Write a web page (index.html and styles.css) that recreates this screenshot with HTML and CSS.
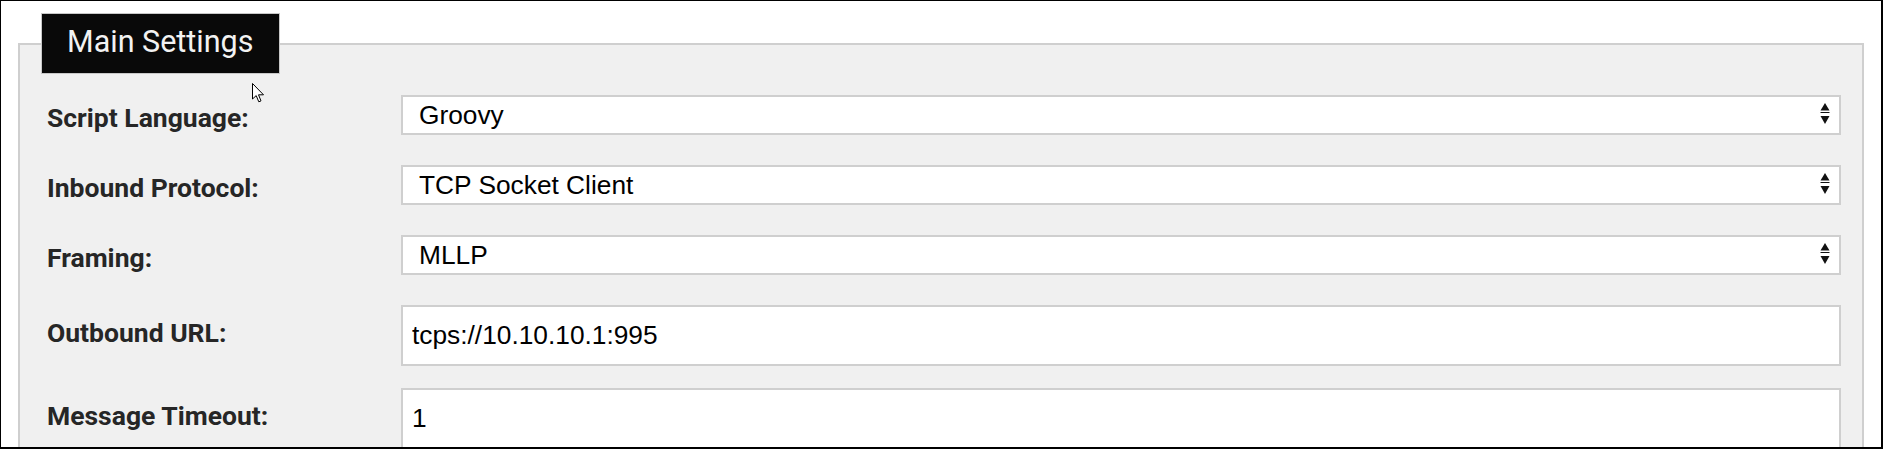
FILE: index.html
```html
<!DOCTYPE html>
<html lang="en">
<head>
<meta charset="utf-8">
<title>Main Settings</title>
<link rel="stylesheet" href="styles.css">
</head>
<body>
<div class="frame">
  <fieldset class="panel">
    <legend class="panel-title">Main Settings</legend>

    <div class="row row-select">
      <label class="row-label" for="lang">Script Language:</label>
      <div class="select-wrap">
        <select id="lang" class="field field-select"><option>Groovy</option></select>
        <svg class="select-arrows" viewBox="0 0 10 24" width="10" height="24"><polygon points="0.5,8.5 5,1 9.5,8.5"/><rect x="0.5" y="10" width="9" height="1"/><polygon points="0.5,14 9.5,14 5,22"/></svg>
      </div>
    </div>

    <div class="row row-select">
      <label class="row-label" for="proto">Inbound Protocol:</label>
      <div class="select-wrap">
        <select id="proto" class="field field-select"><option>TCP Socket Client</option></select>
        <svg class="select-arrows" viewBox="0 0 10 24" width="10" height="24"><polygon points="0.5,8.5 5,1 9.5,8.5"/><rect x="0.5" y="10" width="9" height="1"/><polygon points="0.5,14 9.5,14 5,22"/></svg>
      </div>
    </div>

    <div class="row row-select">
      <label class="row-label" for="framing">Framing:</label>
      <div class="select-wrap">
        <select id="framing" class="field field-select"><option>MLLP</option></select>
        <svg class="select-arrows" viewBox="0 0 10 24" width="10" height="24"><polygon points="0.5,8.5 5,1 9.5,8.5"/><rect x="0.5" y="10" width="9" height="1"/><polygon points="0.5,14 9.5,14 5,22"/></svg>
      </div>
    </div>

    <div class="row row-input">
      <label class="row-label" for="url">Outbound URL:</label>
      <input id="url" class="field field-input" type="text" value="tcps://10.10.10.1:995">
    </div>

    <div class="row row-input">
      <label class="row-label" for="timeout">Message Timeout:</label>
      <input id="timeout" class="field field-input" type="text" value="1">
    </div>
  </fieldset>

  <svg class="cursor" viewBox="0 0 13 21" width="13" height="21"><path d="M0.5,0.5 L0.5,16 L4.2,12.6 L6.8,18.8 L9,17.9 L6.5,11.8 L11.5,11.8 Z"/></svg>
</div>
</body>
</html>
```

FILE: styles.css
```css
html, body {
  margin: 0;
  height: 100%;
  overflow: hidden;
  background: #ffffff;
}

.frame {
  position: relative;
  box-sizing: border-box;
  height: 449px;
  border-style: solid;
  border-color: #000000;
  border-width: 1px 2px 2px 1px;
  padding: 12px 17px 0 17px;
  overflow: hidden;
}

.panel {
  margin: 0;
  min-width: 0;
  border: 2px solid #cfcfcf;
  background: #f0f0f0;
  padding: 21px 21px 0 21px;
}

.panel-title {
  padding: 10px 26px 14px 25px;
  background: #090909;
  color: #f2f2f2;
  border: 1px solid #c8c8c8;
  font-family: Roboto, "Noto Sans", sans-serif;
  font-weight: 400;
  font-size: 30.5px;
  line-height: normal;
}

.row {
  display: flex;
  align-items: flex-start;
}

.row-select {
  margin-bottom: 30px;
}

.row-input {
  margin-bottom: 22px;
}

.row-label {
  flex: 0 0 360px;
  box-sizing: border-box;
  padding-left: 6px;
  padding-top: 7px;
  font-family: Roboto, "Noto Sans", sans-serif;
  font-weight: 700;
  font-size: 26.5px;
  line-height: normal;
  color: #262626;
}

.row-input .row-label {
  padding-top: 12px;
}

.select-wrap {
  flex: 1 1 auto;
  position: relative;
  min-width: 0;
}

.field {
  display: block;
  width: 100%;
  box-sizing: border-box;
  margin: 0;
  border: 2px solid #cfcfcf;
  border-radius: 0;
  background: #ffffff;
  color: #000000;
  font-family: "Liberation Sans", Arial, sans-serif;
  font-size: 26.3px;
  outline: none;
}

.field-select {
  -webkit-appearance: none;
  appearance: none;
  height: 40px;
  padding: 0 40px 0 16px;
}

.field-input {
  flex: 1 1 auto;
  min-width: 0;
  height: 61px;
  padding: 0 9px;
}

.select-arrows {
  position: absolute;
  right: 11px;
  top: 7px;
  fill: #111111;
  pointer-events: none;
}

.cursor {
  position: absolute;
  left: 251px;
  top: 82px;
  fill: #ffffff;
  stroke: #000000;
  stroke-width: 1;
  stroke-linejoin: miter;
}
```
